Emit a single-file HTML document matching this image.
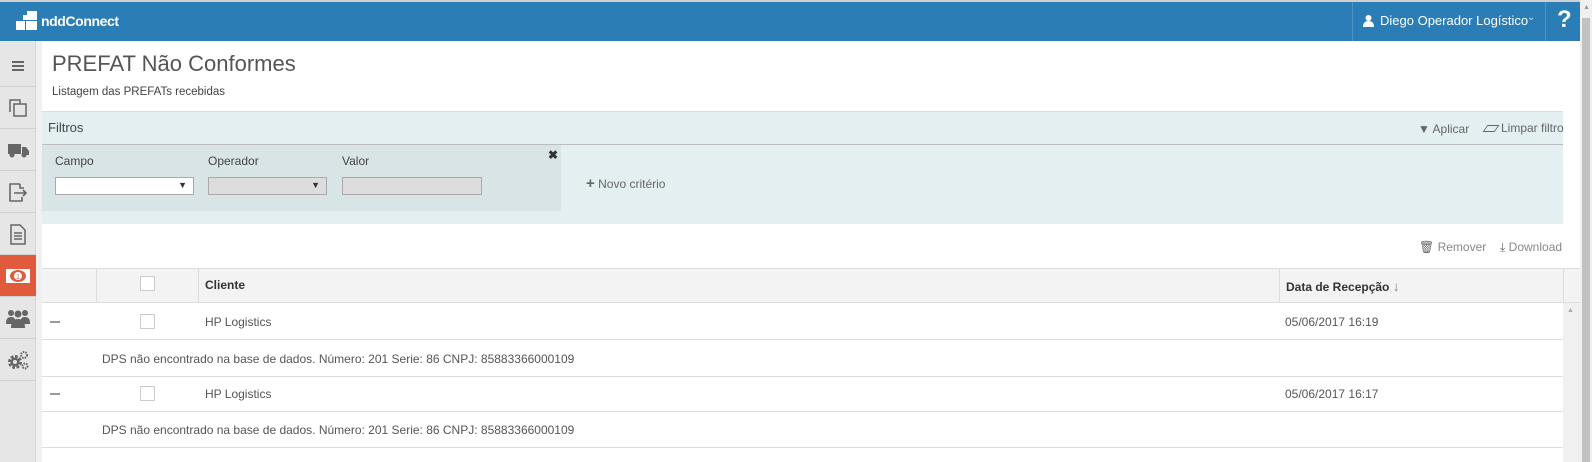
<!DOCTYPE html>
<html><head><meta charset="utf-8"><style>
*{box-sizing:border-box;margin:0;padding:0}
body{width:1592px;height:462px;overflow:hidden;background:#fff;font-family:"Liberation Sans",sans-serif;font-size:12px;color:#555;position:relative}
.abs{position:absolute}
#top{left:0;top:0;width:1580px;height:2px;background:#cfcfcf}
#hdr{left:0;top:2px;width:1580px;height:39px;background:#2a7db5;color:#fff}
#side{left:0;top:41px;width:36px;height:421px;background:#e6e6e6;border-right:1px solid #d6d6d6}
#gap{left:36px;top:41px;width:6px;height:421px;background:#f0f0f0}
.si{position:absolute;left:0;width:36px;height:42px;border-bottom:1px solid #d0d0d0;display:flex;align-items:center;justify-content:center}
#psb{left:1580px;top:0;width:12px;height:462px;background:#f0f0f0}
</style></head><body>
<div class="abs" id="top"></div>
<div class="abs" id="hdr">
 <svg class="abs" style="left:16px;top:9px" width="21" height="20" viewBox="0 0 21 20" fill="#fff"><rect x="11" y="0" width="10" height="9"/><rect x="7" y="4" width="4" height="5"/><rect x="0" y="10" width="9" height="9"/><rect x="10" y="10" width="11" height="9"/></svg>
 <div class="abs" style="left:41px;top:11px;font-size:14px;font-weight:bold;letter-spacing:-0.4px">nddConnect</div>
 <div class="abs" style="left:1352px;top:0;width:1px;height:39px;background:#4d93c4"></div>
 <svg class="abs" style="left:1363px;top:13px" width="11" height="12" viewBox="0 0 11 12" fill="#fff"><circle cx="5.5" cy="3" r="3"/><path d="M0 12 Q0 6 5.5 6 Q11 6 11 12Z"/></svg>
 <div class="abs" style="left:1380px;top:11px;font-size:13px">Diego Operador Logístico</div>
 <div class="abs" style="left:1527px;top:10px;font-size:10px;color:#cfe0ee">&#8964;</div>
 <div class="abs" style="left:1545px;top:0;width:1px;height:39px;background:#4d93c4"></div>
 <div class="abs" style="left:1557px;top:4px;font-size:24px;font-weight:bold">?</div>
</div>
<div class="abs" id="side">
 <div class="si" style="top:4px"><svg width="14" height="12"><path d="M1 2h12M1 6h12M1 10h12" stroke="#666" stroke-width="2"/></svg></div>
 <div class="si" style="top:46px"><svg width="22" height="20" fill="none" stroke="#666" stroke-width="1.5"><rect x="7" y="6" width="12" height="12"/><path d="M3 14V2h10v4"/></svg></div>
 <div class="si" style="top:88px"><svg width="22" height="16" fill="#666"><rect x="1" y="2" width="13" height="10"/><path d="M15 5h4l3 4v4h-7z"/><circle cx="5" cy="13" r="2.5"/><circle cx="17" cy="13" r="2.5"/></svg></div>
 <div class="si" style="top:130px"><svg width="22" height="22" fill="none" stroke="#666" stroke-width="1.6"><path d="M13 3H3v17h12v-4M7 12h12M16 9l3 3-3 3"/><path d="M13 3v4h4"/></svg></div>
 <div class="si" style="top:172px"><svg width="18" height="22" fill="none" stroke="#666" stroke-width="1.5"><path d="M2 2h9l5 5v14H2z"/><path d="M5 10h8M5 13h8M5 16h8"/></svg></div>
 <div class="si" style="top:214px;background:#e05b3c"><svg width="24" height="14"><rect x="0" y="0" width="24" height="14" fill="#fff"/><ellipse cx="12" cy="7" rx="8" ry="6" fill="#e05b3c"/><circle cx="12" cy="7" r="4" fill="#fff"/><text x="12" y="10" font-size="7" text-anchor="middle" fill="#e05b3c" font-family="Liberation Sans">1</text></svg></div>
 <div class="si" style="top:256px"><svg width="24" height="20" fill="#666"><circle cx="5" cy="5" r="3"/><circle cx="19" cy="5" r="3"/><circle cx="12" cy="6" r="3.5"/><path d="M0 15q0-6 5-6q3 0 4 2v5H0zM24 15q0-6-5-6q-3 0-4 2v5h9z"/><path d="M5 20q0-9 7-9q7 0 7 9z"/></svg></div>
 <div class="si" style="top:298px"><svg width="24" height="22" fill="#666" stroke="#666"><circle cx="9" cy="13" r="5" stroke-width="4" stroke-dasharray="2.5 1.4" fill="none"/><circle cx="9" cy="13" r="4"/><circle cx="9" cy="13" r="2" fill="#e6e6e6" stroke="none"/><circle cx="18" cy="6" r="3" stroke-width="2" stroke-dasharray="1.5 1" fill="none"/><circle cx="19" cy="17" r="2.5" stroke-width="2" stroke-dasharray="1.5 1" fill="none"/></svg></div>
</div>
<div class="abs" id="gap"></div>

<div class="abs" style="left:52px;top:51px;font-size:22px;color:#555">PREFAT Não Conformes</div>
<div class="abs" style="left:52px;top:86px;font-size:11.5px;color:#444">Listagem das PREFATs recebidas</div>

<div class="abs" style="left:42px;top:111px;width:1521px;height:113px;background:#e4eff1;border-top:1px solid #ddd"></div>
<div class="abs" style="left:42px;top:144px;width:1521px;height:1px;background:#bdbdbd"></div>
<div class="abs" style="left:48px;top:120px;font-size:13px;color:#444">Filtros</div>
<div class="abs" style="left:1418px;top:122px;font-size:12px;color:#666">&#9660; Aplicar</div>
<div class="abs" style="left:1485px;top:121px;font-size:12px;color:#666"><span style="display:inline-block;width:12px;height:7px;border:1.5px solid #666;transform:skewX(-35deg);margin-right:4px"></span>Limpar filtro</div>
<div class="abs" style="left:42px;top:145px;width:519px;height:66px;background:#d9e4e6"></div>
<div class="abs" style="left:55px;top:154px;font-size:12px;color:#444">Campo</div>
<div class="abs" style="left:208px;top:154px;font-size:12px;color:#444">Operador</div>
<div class="abs" style="left:342px;top:154px;font-size:12px;color:#444">Valor</div>
<div class="abs" style="left:548px;top:148px;font-size:12px;font-weight:bold;color:#333">✖</div>
<div class="abs" style="left:55px;top:177px;width:139px;height:18px;background:#fff;border:1px solid #aaa"><span class="abs" style="right:6px;top:2px;font-size:9px;color:#333">▼</span></div>
<div class="abs" style="left:208px;top:177px;width:119px;height:18px;background:#ddd;border:1px solid #aaa"><span class="abs" style="right:6px;top:2px;font-size:9px;color:#333">▼</span></div>
<div class="abs" style="left:342px;top:177px;width:140px;height:18px;background:#ddd;border:1px solid #aaa"></div>
<div class="abs" style="left:586px;top:175px;font-size:12px;color:#666"><b style="font-size:15px">+</b> Novo critério</div>

<div class="abs" style="left:1419px;top:240px;font-size:12px;color:#888"><span style="color:#666">&#128465;</span> Remover</div>
<div class="abs" style="left:1500px;top:240px;font-size:12px;color:#888"><span style="color:#666">&#10515;</span> Download</div>

<div class="abs" style="left:42px;top:268px;width:1538px;height:35px;background:#f3f3f3;border-top:1px solid #ddd;border-bottom:1px solid #ddd"></div>
<div class="abs" style="left:96px;top:268px;width:1px;height:35px;background:#ddd"></div>
<div class="abs" style="left:198px;top:268px;width:1px;height:35px;background:#ddd"></div>
<div class="abs" style="left:1279px;top:268px;width:1px;height:35px;background:#ddd"></div>
<div class="abs" style="left:1563px;top:268px;width:1px;height:35px;background:#ddd"></div>
<div class="abs" style="left:140px;top:276px;width:15px;height:15px;background:#fff;border:1px solid #ccc"></div>
<div class="abs" style="left:205px;top:278px;font-size:12px;font-weight:bold;color:#333">Cliente</div>
<div class="abs" style="left:1286px;top:278px;font-size:12px;font-weight:bold;color:#333">Data de Recepção <span style="font-weight:normal;color:#888;font-size:14px">↓</span></div>

<div class="abs" style="left:1563px;top:303px;width:17px;height:159px;background:#f0f0f0"></div>
<div class="abs" style="left:1567px;top:307px;font-size:7px;color:#aaa">▲</div>

<div class="abs" style="left:42px;top:339px;width:1521px;height:1px;background:#ddd"></div>
<div class="abs" style="left:42px;top:376px;width:1521px;height:1px;background:#ddd"></div>
<div class="abs" style="left:42px;top:411px;width:1521px;height:1px;background:#ddd"></div>
<div class="abs" style="left:42px;top:447px;width:1521px;height:1px;background:#ddd"></div>

<div class="abs" style="left:50px;top:321px;width:10px;height:2px;background:#999"></div>
<div class="abs" style="left:140px;top:314px;width:15px;height:15px;border:1px solid #ccc"></div>
<div class="abs" style="left:205px;top:315px;color:#555">HP Logistics</div>
<div class="abs" style="left:1285px;top:315px;color:#555">05/06/2017 16:19</div>
<div class="abs" style="left:102px;top:352px;color:#555">DPS não encontrado na base de dados. Número: 201 Serie: 86 CNPJ: 85883366000109</div>

<div class="abs" style="left:50px;top:393px;width:10px;height:2px;background:#999"></div>
<div class="abs" style="left:140px;top:386px;width:15px;height:15px;border:1px solid #ccc"></div>
<div class="abs" style="left:205px;top:387px;color:#555">HP Logistics</div>
<div class="abs" style="left:1285px;top:387px;color:#555">05/06/2017 16:17</div>
<div class="abs" style="left:102px;top:423px;color:#555">DPS não encontrado na base de dados. Número: 201 Serie: 86 CNPJ: 85883366000109</div>

<div class="abs" id="psb"><div class="abs" style="left:3px;top:4px;font-size:7px;color:#999">▲</div><div class="abs" style="left:2px;top:18px;width:8px;height:444px;background:#c1c1c1"></div></div>
</body></html>
